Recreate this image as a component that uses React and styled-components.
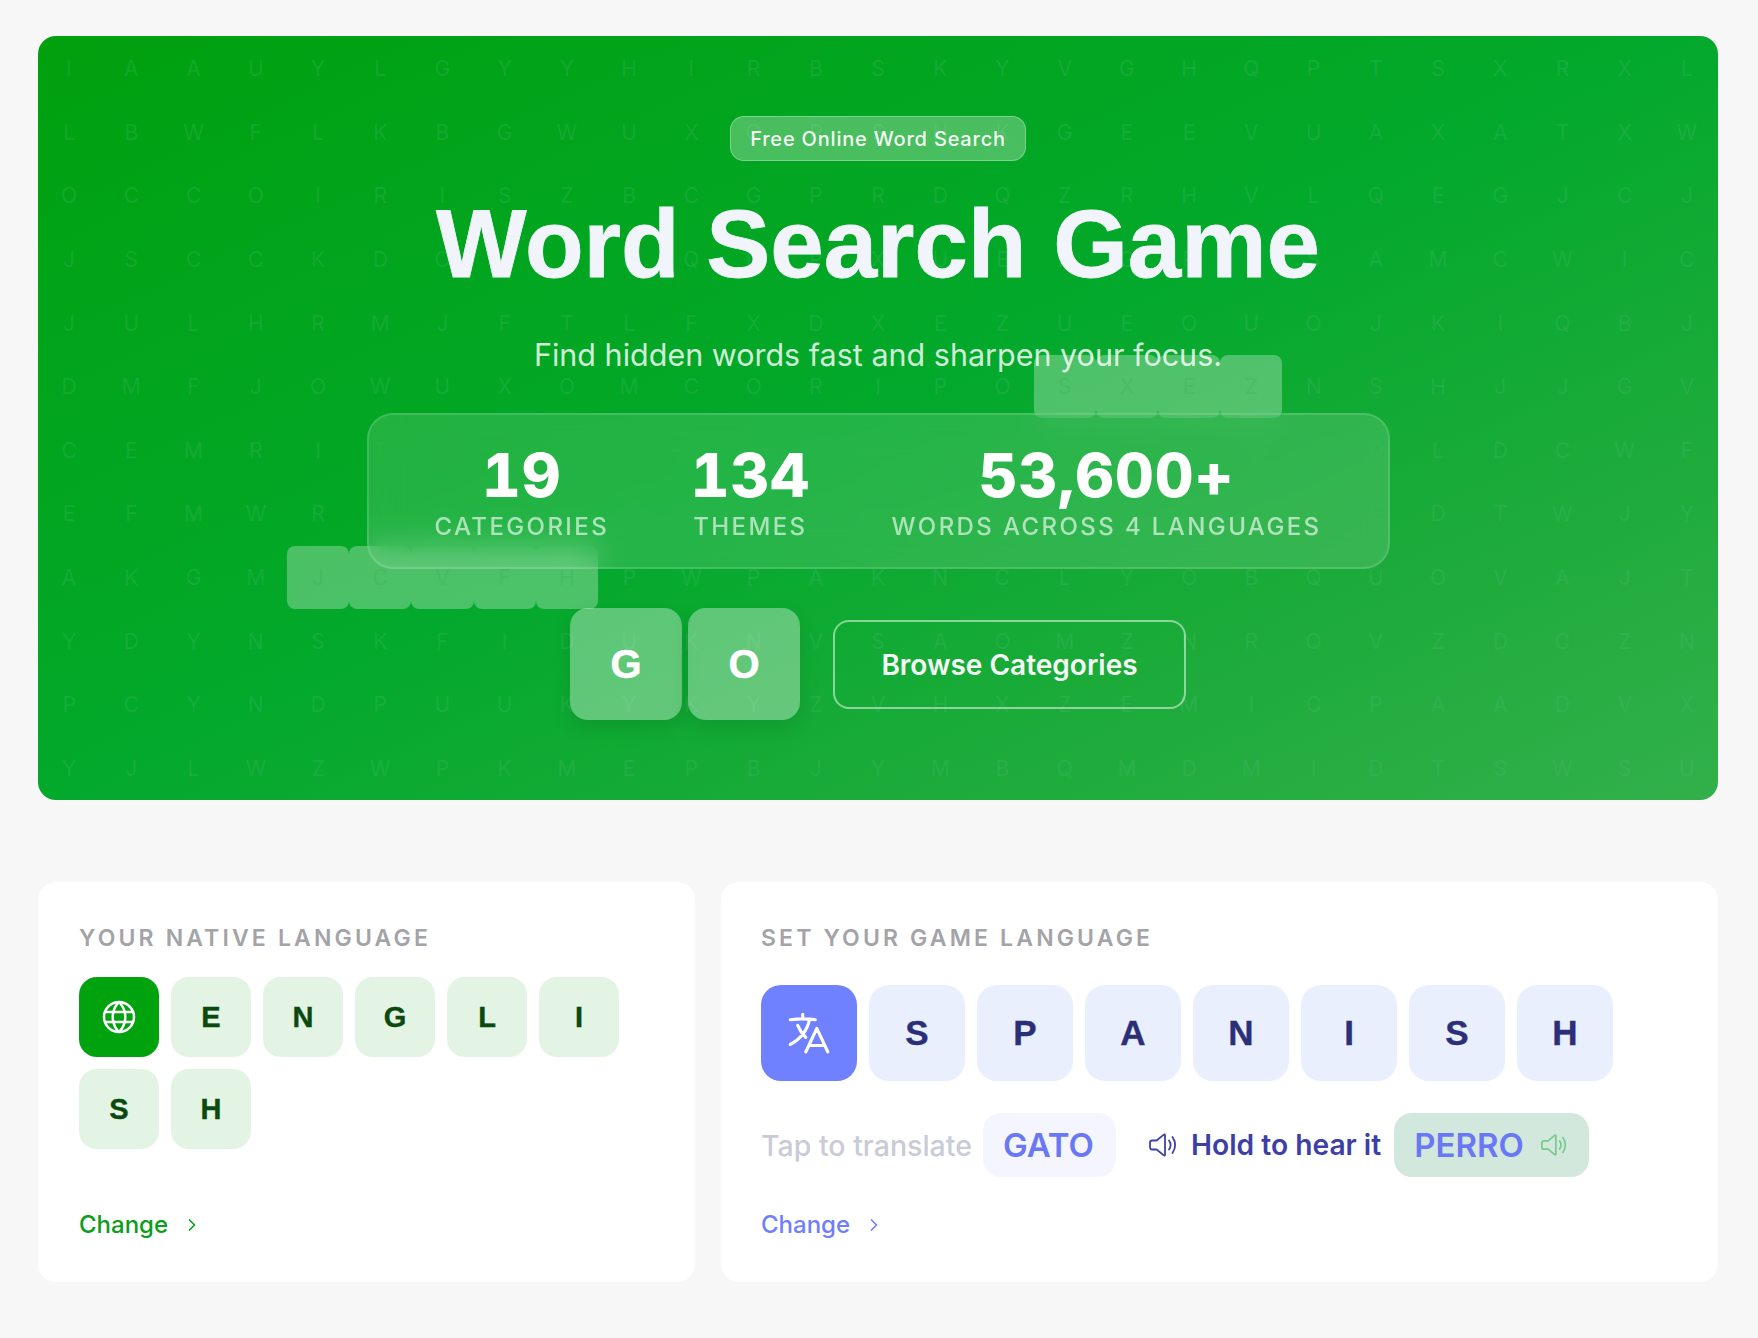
import React from 'react'
import styled, { createGlobalStyle } from 'styled-components'
import { ChevronRight } from 'lucide-react'
import { PiGlobe } from 'react-icons/pi'
import { HiOutlineLanguage } from 'react-icons/hi2'

const GRID = [
  'IAAUYLGYYHIRBSKYVGHQPTSXRXL',
  'LBWFLKBGWUXQPSHKGEEVUAXATXW',
  'OCCOIRISZBCGPRDQZRHVLQEGJCJ',
  'JSCCKDOTIEQNPXUEBGRLSAMCWIC',
  'JULHRMJFTLFXDXEZUEOUOJKIQBJ',
  'DMFJOWUXOMCORIPOSXEZNSHJJGV',
  'CEMRITUGNAOHYSBKZPVDXQLDCWF',
  'EFMWRJOBTAIKNGVQSHUPLEDTWJY',
  'AKGMJCVFHPWPAKNCLYOBQUOVAJT',
  'YDYNSKFIDUKNVSAOMZNRQVZDCZN',
  'PCYNDPUUKYKYZVHXZEMICPAADVX',
  'YJLWZWPKMEPBJYMBQMDMIDTSWSU',
]

const FOUND = { 5: [16, 19], 8: [4, 8] }

const STATS = [
  { value: '19', label: 'Categories' },
  { value: '134', label: 'Themes' },
  { value: '53,600+', label: 'Words across 4 languages' },
]

const GlobalStyle = createGlobalStyle`
  body {
    margin: 0;
    background: #f7f7f7;
    font-family: Inter, 'Liberation Sans', sans-serif;
  }
`

const Page = styled.div`
  padding: 36px 40px 56px 38px;
`

const Hero = styled.section`
  position: relative;
  overflow: hidden;
  height: 764px;
  box-sizing: border-box;
  padding-top: 80px;
  border-radius: 18px;
  background: linear-gradient(155deg, #00a00e 0%, #03a92c 50%, #1cab3a 75%, #32b04b 100%);
  display: flex;
  flex-direction: column;
  align-items: center;
`

const LetterGrid = styled.div`
  position: absolute;
  inset: 1px 0 0;
  display: grid;
  grid-template-columns: repeat(27, 1fr);
  grid-template-rows: repeat(12, 1fr);
`

const Cell = styled.span`
  display: flex;
  align-items: center;
  justify-content: center;
  border-radius: 8px;
  font-size: 21px;
  color: ${p => (p.$found ? 'rgba(60, 170, 90, 0.3)' : 'rgba(90, 190, 130, 0.22)')};
  background: ${p => (p.$found ? 'rgba(255, 255, 255, 0.29)' : 'transparent')};
`

const Badge = styled.div`
  position: relative;
  box-sizing: border-box;
  height: 45px;
  padding: 0 19px;
  display: flex;
  align-items: center;
  border: 1px solid rgba(255, 255, 255, 0.3);
  border-radius: 14px;
  background: rgba(255, 255, 255, 0.28);
  color: #f4f8f4;
  font-size: 20px;
  font-weight: 500;
  letter-spacing: 0.8px;
`

const Title = styled.h1`
  position: relative;
  margin: 30px 0 0;
  font-family: 'Liberation Sans', Arial, sans-serif;
  font-size: 96px;
  line-height: 106px;
  font-weight: 700;
  -webkit-text-stroke: 0.8px #f1f4fa;
  color: #f1f4fa;
`

const Subtitle = styled.p`
  position: relative;
  margin: 38px 0 0;
  font-size: 30.5px;
  line-height: 40px;
  color: rgba(255, 255, 255, 0.82);
`

const StatsPanel = styled.div`
  position: relative;
  margin-top: 38px;
  box-sizing: border-box;
  width: 1023px;
  height: 156px;
  padding: 28px 66px 0;
  display: flex;
  justify-content: space-between;
  border: 2px solid rgba(255, 255, 255, 0.14);
  border-radius: 26px;
  background: rgba(255, 255, 255, 0.13);
  backdrop-filter: blur(16px);
`

const Stat = styled.div`
  display: flex;
  flex-direction: column;
  align-items: center;
`

const StatValue = styled.div`
  font-size: 60px;
  line-height: 64px;
  font-weight: 800;
  letter-spacing: 1px;
  font-variant-numeric: tabular-nums;
  color: #fff;
`

const StatLabel = styled.div`
  margin-top: 5px;
  font-size: 24px;
  line-height: 30px;
  font-weight: 500;
  letter-spacing: 2.4px;
  text-transform: uppercase;
  color: rgba(255, 255, 255, 0.62);
`

const Actions = styled.div`
  position: relative;
  margin-top: 39px;
  display: flex;
  align-items: center;
`

const PlayTile = styled.div`
  width: 112px;
  height: 112px;
  margin-right: 6px;
  display: flex;
  align-items: center;
  justify-content: center;
  border-radius: 18px;
  background: rgba(255, 255, 255, 0.35);
  box-shadow: 0 8px 20px rgba(0, 0, 0, 0.1);
  font-family: 'Liberation Sans', Arial, sans-serif;
  font-size: 40px;
  font-weight: 700;
  -webkit-text-stroke: 0.5px #fff;
  color: #fff;
`

const BrowseButton = styled.button`
  box-sizing: border-box;
  width: 353px;
  height: 89px;
  margin-left: 27px;
  padding: 2px 0 0;
  border: 2px solid rgba(255, 255, 255, 0.5);
  border-radius: 16px;
  background: none;
  font-family: inherit;
  font-size: 28px;
  font-weight: 600;
  color: #f4f8f4;
`

const Cards = styled.div`
  margin-top: 82px;
  display: grid;
  grid-template-columns: 657px 1fr;
  gap: 26px;
`

const Card = styled.section`
  box-sizing: border-box;
  height: 400px;
  padding: 40px ${p => p.$inset}px 42px;
  border-radius: 18px;
  background: #fff;
  display: flex;
  flex-direction: column;
`

const CardTitle = styled.h2`
  margin: 0;
  font-size: 23px;
  line-height: 32px;
  font-weight: 600;
  letter-spacing: 3.15px;
  text-transform: uppercase;
  color: #a3a3a8;
`

const Tiles = styled.div`
  margin-top: ${p => p.$gap}px;
  display: flex;
  flex-wrap: wrap;
  gap: 12px;
`

const Tile = styled.div`
  width: ${p => p.$size}px;
  height: ${p => p.$size}px;
  display: flex;
  align-items: center;
  justify-content: center;
  border-radius: ${p => (p.$size > 90 ? 20 : 18)}px;
  font-family: 'Liberation Sans', Arial, sans-serif;
  font-size: ${p => (p.$size > 90 ? 35 : 29)}px;
  font-weight: 700;
  -webkit-text-stroke: 0.4px ${p => p.$ink};
  color: ${p => p.$ink};
  background: ${p => p.$bg};
`

const TranslateRow = styled.div`
  margin-top: 32px;
  display: flex;
  align-items: center;
`

const Hint = styled.span`
  color: ${p => p.$color};
  font-size: ${p => p.$size || 28.5}px;
  font-weight: ${p => p.$weight || 500};
  margin-right: ${p => p.$gap}px;
`

const WordChip = styled.span`
  box-sizing: border-box;
  height: 64px;
  padding: 0 22px 0 20px;
  display: flex;
  align-items: center;
  gap: 17px;
  border-radius: 18px;
  font-size: 33px;
  font-weight: 600;
  color: #6a78f5;
  background: ${p => p.$bg};
`

const SpeakerIcon = styled.svg`
  width: ${p => p.$width}px;
  height: 24px;
  flex: none;
  margin: ${p => p.$margin || 0};
  fill: none;
  stroke: ${p => p.$color};
  stroke-width: 1.8;
  stroke-linecap: round;
  stroke-linejoin: round;
`

const ChangeLink = styled.a`
  margin-top: auto;
  display: flex;
  align-items: center;
  gap: 14px;
  font-size: 24px;
  line-height: 30px;
  font-weight: 500;
  color: ${p => p.$color};
`

const Speaker = ({ color, margin, width = 28 }) => (
  <SpeakerIcon viewBox="0 0 28 24" $color={color} $margin={margin} $width={width}>
    <path d="M14.8 1.6c.6-.5 1.2-.2 1.2.6v19.6c0 .8-.6 1.1-1.2.6L7.6 16.5H3.2C1.9 16.5 1 15.6 1 14.3V9.7c0-1.3.9-2.2 2.2-2.2h4.4z" />
    <path d="M20 7.5c2 2.8 2 6.2 0 9" />
    <path d="M23.5 4c3.5 4.8 3.5 11.2 0 16" />
  </SpeakerIcon>
)

export default function App() {
  return (
    <Page>
      <GlobalStyle />
      <Hero>
        <LetterGrid>
          {GRID.map((row, r) =>
            row.split('').map((letter, c) => (
              <Cell key={`${r}-${c}`} $found={FOUND[r] && c >= FOUND[r][0] && c <= FOUND[r][1]}>
                {letter}
              </Cell>
            ))
          )}
        </LetterGrid>
        <Badge>Free Online Word Search</Badge>
        <Title>Word Search Game</Title>
        <Subtitle>Find hidden words fast and sharpen your focus.</Subtitle>
        <StatsPanel>
          {STATS.map(s => (
            <Stat key={s.label}>
              <StatValue>{s.value}</StatValue>
              <StatLabel>{s.label}</StatLabel>
            </Stat>
          ))}
        </StatsPanel>
        <Actions>
          <PlayTile>G</PlayTile>
          <PlayTile>O</PlayTile>
          <BrowseButton>Browse Categories</BrowseButton>
        </Actions>
      </Hero>
      <Cards>
        <Card $inset={41}>
          <CardTitle>Your native language</CardTitle>
          <Tiles $gap={23}>
            <Tile $size={80} $bg="#00a20e" $ink="#fff">
              <PiGlobe size={40} />
            </Tile>
            {'ENGLISH'.split('').map((l, i) => (
              <Tile key={i} $size={80} $bg="#e3f3e4" $ink="#0a4a0e">
                {l}
              </Tile>
            ))}
          </Tiles>
          <ChangeLink $color="#0a9e1a">
            Change <ChevronRight size={20} />
          </ChangeLink>
        </Card>
        <Card $inset={40}>
          <CardTitle>Set your game language</CardTitle>
          <Tiles $gap={31}>
            <Tile $size={96} $bg="#6f81ff" $ink="#fff">
              <HiOutlineLanguage size={50} />
            </Tile>
            {'SPANISH'.split('').map((l, i) => (
              <Tile key={i} $size={96} $bg="#eaeffd" $ink="#2b2f78">
                {l}
              </Tile>
            ))}
          </Tiles>
          <TranslateRow>
            <Hint $color="#c9cbd6" $gap={11}>Tap to translate</Hint>
            <WordChip $bg="#f4f5fe">GATO</WordChip>
            <Speaker color="#3f40ab" margin="0 14px 0 33px" />
            <Hint $color="#3d3fa6" $weight={600} $size={28.2} $gap={13}>Hold to hear it</Hint>
            <WordChip $bg="#d2e8dc">
              PERRO
              <Speaker color="#77c98c" width={26} />
            </WordChip>
          </TranslateRow>
          <ChangeLink $color="#6f7ffb">
            Change <ChevronRight size={20} />
          </ChangeLink>
        </Card>
      </Cards>
    </Page>
  )
}
